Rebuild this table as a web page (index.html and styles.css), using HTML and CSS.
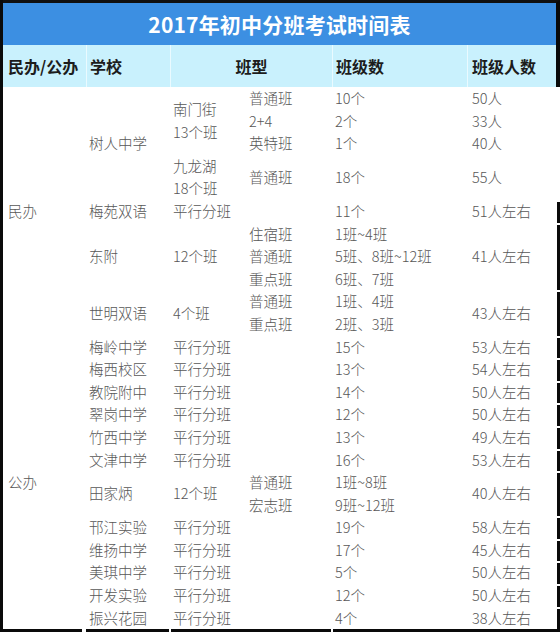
FILE: index.html
```html
<!DOCTYPE html>
<html lang="zh-CN">
<head>
<meta charset="utf-8">
<title>2017年初中分班考试时间表</title>
<link rel="stylesheet" href="styles.css">
</head>
<body>
<div class="sheet">
  <div class="title">2017年初中分班考试时间表</div>
  <table class="tbl">
    <colgroup>
      <col class="w1"><col class="w2"><col class="w3"><col class="w4"><col class="w5"><col class="w6">
    </colgroup>
    <thead>
      <tr>
        <th class="first">民办/公办</th>
        <th>学校</th>
        <th colspan="2" class="center">班型</th>
        <th>班级数</th>
        <th class="last">班级人数</th>
      </tr>
    </thead>
    <tbody>
      <tr><td rowspan="11" class="c1">民办</td><td rowspan="5">树人中学</td><td rowspan="3">南门街<br>13个班</td><td>普通班</td><td>10个</td><td class="c6">50人</td></tr>
      <tr><td>2+4</td><td>2个</td><td class="c6">33人</td></tr>
      <tr><td>英特班</td><td>1个</td><td class="c6">40人</td></tr>
      <tr><td rowspan="2">九龙湖<br>18个班</td><td rowspan="2">普通班</td><td rowspan="2">18个</td><td rowspan="2" class="c6">55人</td></tr>
      <tr></tr>
      <tr><td>梅苑双语</td><td>平行分班</td><td></td><td>11个</td><td class="c6 rb">51人左右</td></tr>
      <tr><td rowspan="3">东附</td><td rowspan="3">12个班</td><td>住宿班</td><td>1班~4班</td><td rowspan="3" class="c6 rb">41人左右</td></tr>
      <tr><td>普通班</td><td>5班、8班~12班</td></tr>
      <tr><td>重点班</td><td>6班、7班</td></tr>
      <tr><td rowspan="2">世明双语</td><td rowspan="2">4个班</td><td>普通班</td><td>1班、4班</td><td rowspan="2" class="c6 rb">43人左右</td></tr>
      <tr><td>重点班</td><td>2班、3班</td></tr>
      <tr><td rowspan="13" class="c1">公办</td><td>梅岭中学</td><td>平行分班</td><td></td><td>15个</td><td class="c6 rb">53人左右</td></tr>
      <tr><td>梅西校区</td><td>平行分班</td><td></td><td>13个</td><td class="c6 rb">54人左右</td></tr>
      <tr><td>教院附中</td><td>平行分班</td><td></td><td>14个</td><td class="c6 rb">50人左右</td></tr>
      <tr><td>翠岗中学</td><td>平行分班</td><td></td><td>12个</td><td class="c6 rb">50人左右</td></tr>
      <tr><td>竹西中学</td><td>平行分班</td><td></td><td>13个</td><td class="c6 rb">49人左右</td></tr>
      <tr><td>文津中学</td><td>平行分班</td><td></td><td>16个</td><td class="c6 rb">53人左右</td></tr>
      <tr><td rowspan="2">田家炳</td><td rowspan="2">12个班</td><td>普通班</td><td>1班~8班</td><td rowspan="2" class="c6 rb">40人左右</td></tr>
      <tr><td>宏志班</td><td>9班~12班</td></tr>
      <tr><td>邗江实验</td><td>平行分班</td><td></td><td>19个</td><td class="c6 rb">58人左右</td></tr>
      <tr><td>维扬中学</td><td>平行分班</td><td></td><td>17个</td><td class="c6 rb">45人左右</td></tr>
      <tr><td>美琪中学</td><td>平行分班</td><td></td><td>5个</td><td class="c6 rb">50人左右</td></tr>
      <tr><td>开发实验</td><td>平行分班</td><td></td><td>12个</td><td class="c6 rb">50人左右</td></tr>
      <tr><td>振兴花园</td><td>平行分班</td><td></td><td>4个</td><td class="c6 rb">38人左右</td></tr>
    </tbody>
  </table>
  <div class="bottom">
    <span class="s1"></span><span class="s2"></span><span class="s3"></span><span class="s4"></span>
  </div>
</div>
</body>
</html>
```

FILE: styles.css
```css
html, body {
  margin: 0;
  padding: 0;
  background: #ffffff;
}

body {
  font-family: "Noto Sans CJK SC", "Noto Sans", sans-serif;
  width: 560px;
  height: 633px;
  overflow: hidden;
}

.sheet {
  width: 557px;
  border-left: 3px solid #0a0a0a;
}

.title {
  height: 42px;
  border-top: 3px solid #101010;
  border-right: 4px solid #0a0a0a;
  background: #3c8fe2;
  color: #ffffff;
  font-weight: 700;
  font-size: 21px;
  display: flex;
  align-items: center;
  justify-content: center;
  letter-spacing: 0.2px;
}

.tbl {
  width: 557px;
  table-layout: fixed;
  border-collapse: separate;
  border-spacing: 0;
}

.w1 { width: 83px; }
.w2 { width: 84px; }
.w3 { width: 76px; }
.w4 { width: 86px; }
.w5 { width: 135px; }
.w6 { width: 93px; }

.tbl th {
  height: 42px;
  padding: 0 3px;
  background: #c9f1fd;
  border-left: 1px solid #eafaff;
  color: #1c1c1c;
  font-size: 16px;
  font-weight: 700;
  text-align: left;
  vertical-align: middle;
  white-space: nowrap;
}

.tbl th.first {
  border-left: none;
  padding-left: 5px;
}

.tbl th.center {
  text-align: center;
}

.tbl th.last {
  border-right: 4px solid #0a0a0a;
  padding-left: 4px;
}

.tbl td {
  height: 22.6px;
  padding: 0 3px;
  font-size: 14.5px;
  font-weight: 300;
  line-height: 22.6px;
  color: #575757;
  vertical-align: middle;
  white-space: nowrap;
}

.tbl tbody tr {
  height: 22.6px;
}

.tbl td.c1 {
  padding-left: 5px;
}

.tbl td.c6 {
  padding-left: 5px;
}

.tbl td.rb {
  position: relative;
}

.tbl td.rb::after {
  content: "";
  position: absolute;
  right: 0;
  top: 2px;
  bottom: 0;
  width: 3px;
  background: #0a0a0a;
}

.bottom {
  display: flex;
  height: 3px;
  margin-left: -3px;
}

.bottom span {
  display: block;
  height: 3px;
  background: #0a0a0a;
}

.bottom .s1 { width: 82px; margin-right: 4px; }
.bottom .s2 { width: 83px; margin-right: 2px; }
.bottom .s3 { width: 160px; margin-right: 2px; }
.bottom .s4 { width: 227px; }
```
